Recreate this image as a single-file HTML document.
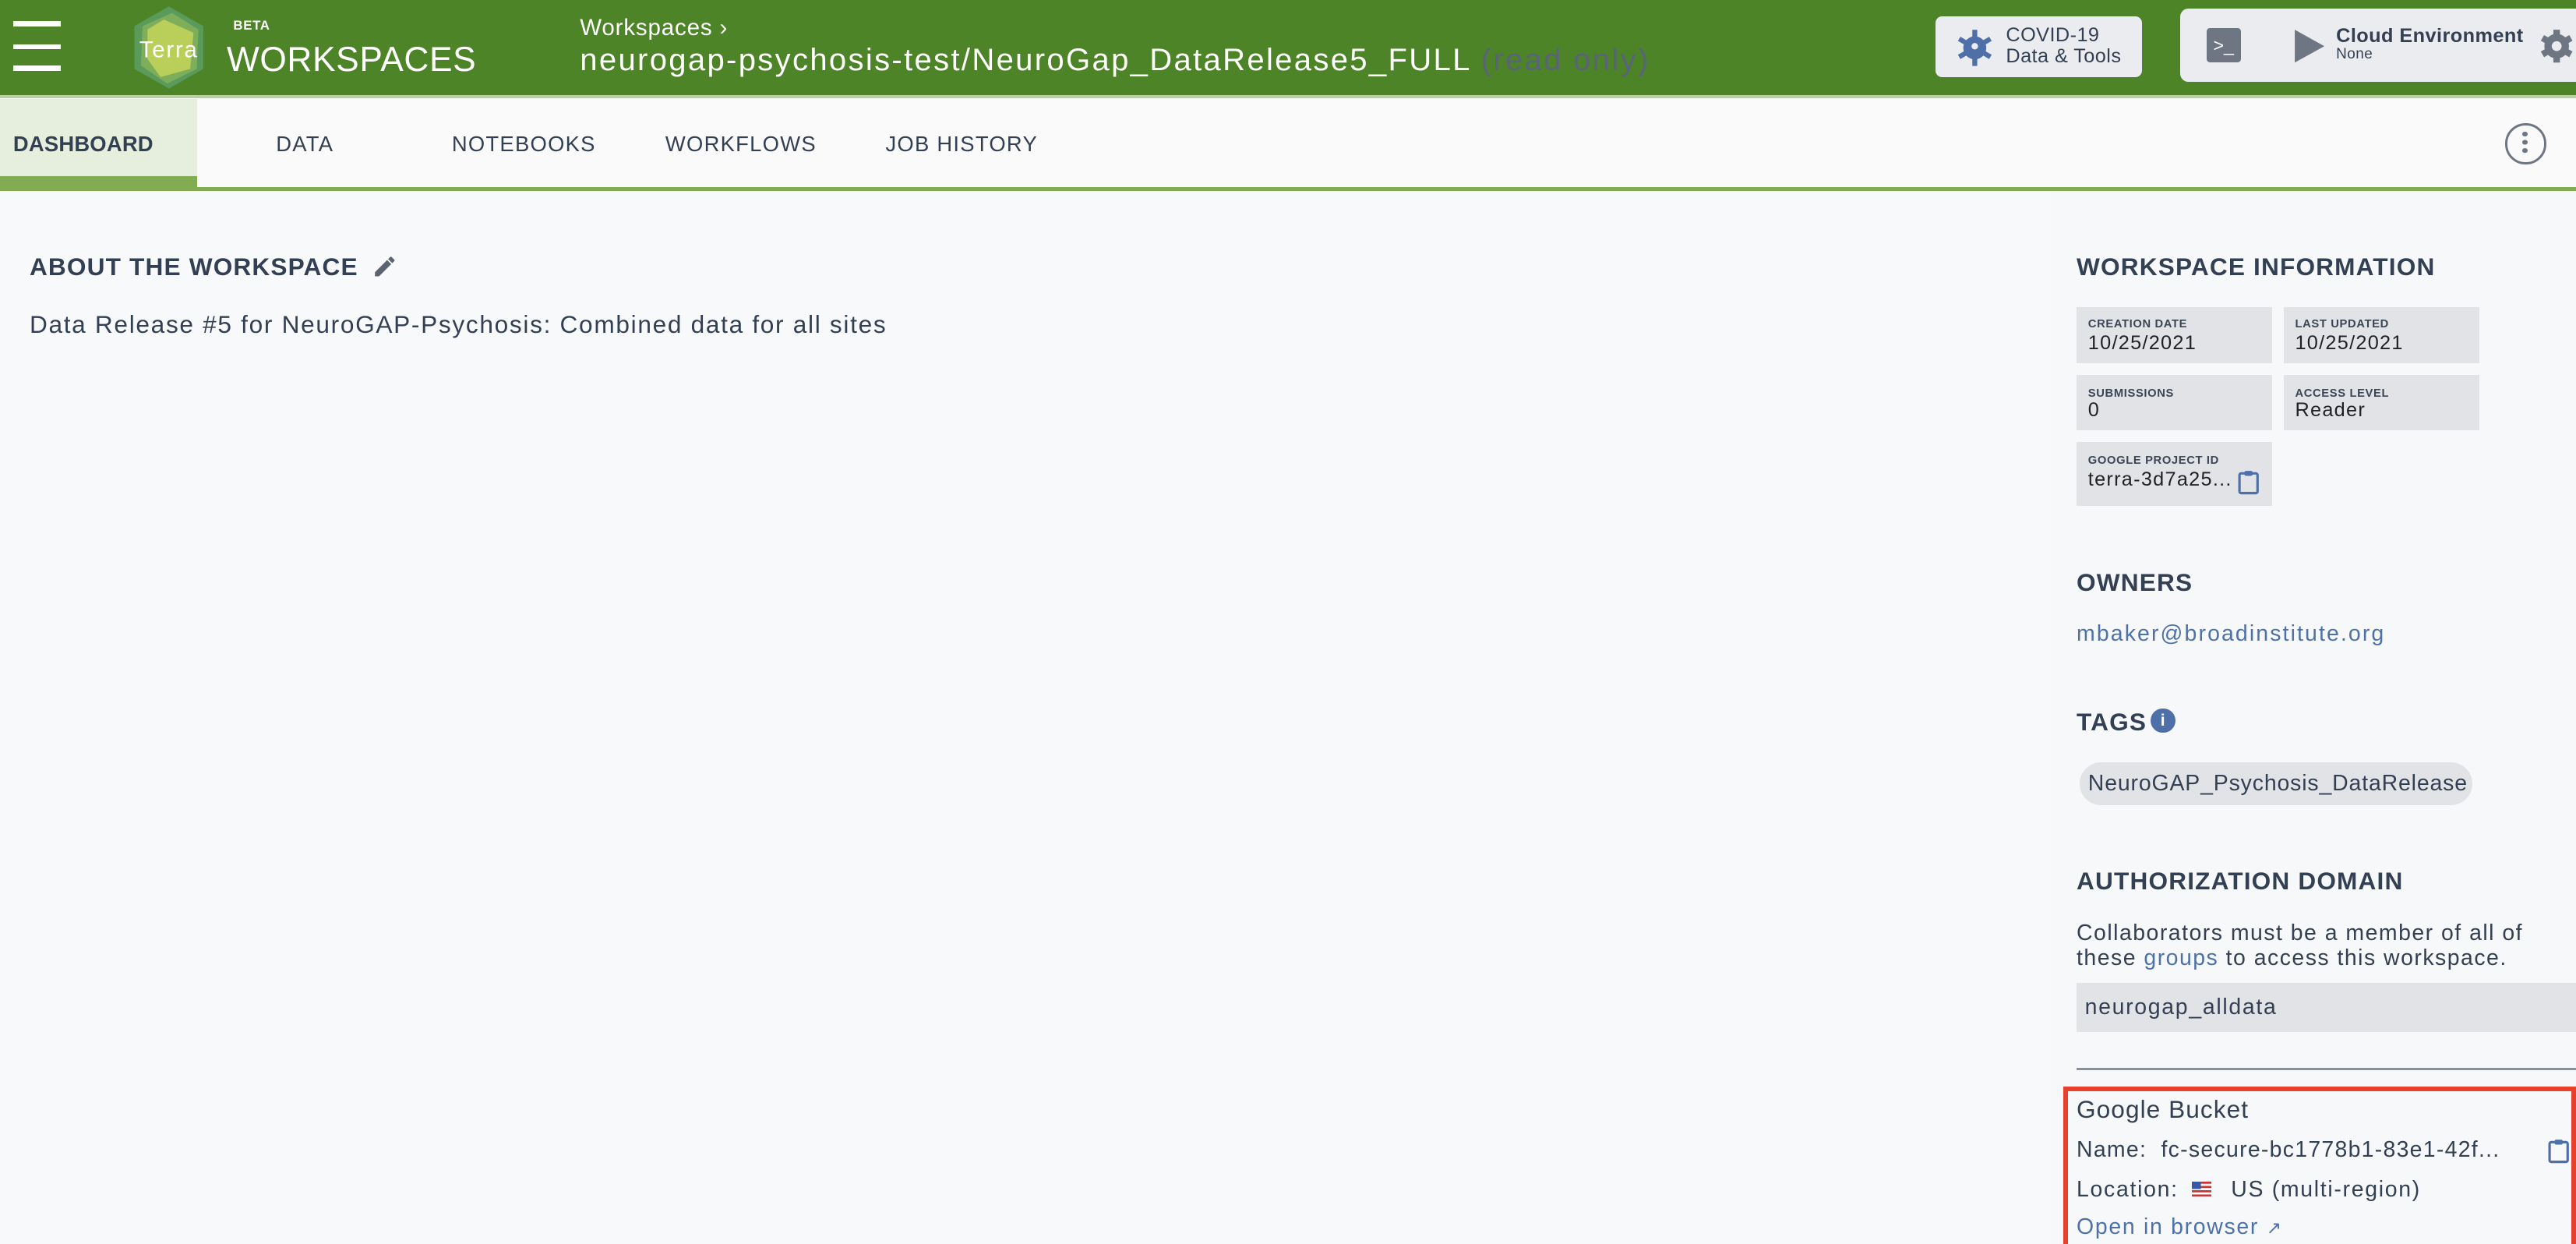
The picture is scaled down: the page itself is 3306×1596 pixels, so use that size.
<!DOCTYPE html>
<html><head><meta charset="utf-8"><style>
html,body{margin:0;padding:0;}
body{width:3306px;height:1596px;overflow:hidden;background:#f7f8fa;}
#r{zoom:2.10842;width:1568px;height:757px;position:relative;overflow:hidden;font-family:"Liberation Sans",sans-serif;color:#333f52;letter-spacing:0.8px;}
.a{position:absolute;white-space:nowrap;line-height:1;}
.h{font-weight:bold;font-size:15px;color:#333f52;letter-spacing:0.55px;}
.box{position:absolute;background:#e1e3e7;}
.lbl{position:absolute;font-size:7px;font-weight:bold;color:#3a4556;letter-spacing:0.3px;}
.val{position:absolute;font-size:12px;color:#222;letter-spacing:0.6px;}
.tab{position:absolute;top:81px;font-size:13px;color:#333f52;letter-spacing:0.6px;}
.link{color:#4d72aa;}
</style></head><body><div id="r">
<!-- header -->
<div class="a" style="left:0;top:0;width:1568px;height:58px;background:#4d8427;"></div>
<div class="a" style="left:0;top:58px;width:1568px;height:2px;background:#b9d29c;"></div>
<div class="a" style="left:8px;top:13px;width:29px;height:3px;background:#fff;"></div>
<div class="a" style="left:8px;top:27px;width:29px;height:3px;background:#fff;"></div>
<div class="a" style="left:8px;top:40px;width:29px;height:3px;background:#fff;"></div>
<svg class="a" style="left:78px;top:2px" width="50" height="54" viewBox="0 0 50 54">
<polygon points="25,2 46,14 46,40 25,52 4,40 4,14" fill="#5a9a5a"/>
<polygon points="27,6 43,16 42,40 24,49 8,38 9,14" fill="#7fae5a"/>
<polygon points="22,10 40,18 38,40 20,45 12,34 12,16" fill="#b9cf59"/>
<text x="25" y="33" font-family="Liberation Sans" font-size="14" fill="#fff" text-anchor="middle">Terra</text>
</svg>
<div class="a" style="left:142px;top:12px;font-size:8px;font-weight:bold;color:#fff;letter-spacing:0.3px;">BETA</div>
<div class="a" style="left:138px;top:26px;font-size:21px;color:#fff;letter-spacing:0.3px;">WORKSPACES</div>
<div class="a" style="left:353px;top:10px;font-size:14px;color:#fff;letter-spacing:0.4px;">Workspaces ›</div>
<div class="a" style="left:353px;top:27px;font-size:19px;color:#fff;letter-spacing:1.1px;">neurogap-psychosis-test/NeuroGap_DataRelease5_FULL <span style="color:#5a6478">(read only)</span></div>
<div class="a" style="left:1178px;top:10px;width:126px;height:37px;background:#eaecf0;border-radius:4px;"></div>
<svg class="a" style="left:1189px;top:16px" width="26" height="26" viewBox="0 0 26 26"><g fill="#4e6fa8"><circle cx="13" cy="13" r="7"/><rect x="11.5" y="2" width="3" height="22"/><rect x="11.5" y="2" width="3" height="22" transform="rotate(60 13 13)"/><rect x="11.5" y="2" width="3" height="22" transform="rotate(120 13 13)"/></g><circle cx="13" cy="12" r="2" fill="#eaecf0"/></svg>
<div class="a" style="left:1221px;top:15px;font-size:12px;color:#333f52;line-height:13px;letter-spacing:0.2px;">COVID-19<br>Data &amp; Tools</div>
<div class="a" style="left:1327px;top:5px;width:250px;height:45px;background:#eaecf0;border-radius:5px;"></div>
<div class="a" style="left:1343px;top:17px;width:21px;height:21px;background:#6f7683;border-radius:2px;color:#fff;font-size:11px;line-height:21px;text-align:center;letter-spacing:0;">&gt;_</div>
<svg class="a" style="left:1396px;top:17px" width="20" height="22"><polygon points="1,1 19,11 1,21" fill="#6f7683"/></svg>
<div class="a" style="left:1422px;top:16px;font-size:12px;font-weight:bold;color:#333f52;letter-spacing:0.2px;">Cloud Environment</div>
<div class="a" style="left:1422px;top:29px;font-size:9px;color:#333f52;letter-spacing:0.2px;">None</div>
<svg class="a" style="left:1545px;top:17px" width="22" height="22" viewBox="0 0 22 22"><g fill="#6f7683"><circle cx="11" cy="11" r="7.5"/><rect x="9" y="1" width="4" height="20"/><rect x="9" y="1" width="4" height="20" transform="rotate(60 11 11)"/><rect x="9" y="1" width="4" height="20" transform="rotate(120 11 11)"/></g><circle cx="11" cy="11" r="3" fill="#eaecf0"/></svg>
<!-- tabs -->
<div class="a" style="left:0;top:60px;width:1568px;height:55px;background:#fafafa;"></div>
<div class="a" style="left:0;top:60px;width:120px;height:47px;background:#e6efdd;"></div>
<div class="a" style="left:0;top:107px;width:120px;height:8px;background:#82ac52;"></div>
<div class="a" style="left:0;top:114px;width:1568px;height:2px;background:#82ac52;"></div>
<div class="tab a" style="left:8px;font-weight:bold;letter-spacing:0.1px;">DASHBOARD</div>
<div class="tab a" style="left:168px;">DATA</div>
<div class="tab a" style="left:275px;">NOTEBOOKS</div>
<div class="tab a" style="left:405px;">WORKFLOWS</div>
<div class="tab a" style="left:539px;">JOB HISTORY</div>
<div class="a" style="left:1525px;top:75px;width:22px;height:22px;border:1.5px solid #6f7683;border-radius:50%;"></div>
<div class="a" style="left:1535.5px;top:80px;width:3px;height:3px;background:#6f7683;border-radius:50%;box-shadow:0 5px 0 #6f7683,0 10px 0 #6f7683;"></div>
<!-- main -->
<div class="a" style="left:0;top:116px;width:1249px;height:641px;background:#f8f9fb;"></div>
<div class="a h" style="left:18px;top:155px;">ABOUT THE WORKSPACE</div>
<svg class="a" style="left:226px;top:154px" width="16" height="16" viewBox="0 0 16 16"><path d="M2 11.5V14h2.5l7.4-7.4-2.5-2.5zM13.7 4.8a.7.7 0 000-1L12.2 2.3a.7.7 0 00-1 0L10 3.5 12.5 6z" fill="#5b6270"/></svg>
<div class="a" style="left:18px;top:190px;font-size:15px;color:#333f52;">Data Release #5 for NeuroGAP-Psychosis: Combined data for all sites</div>
<!-- right panel -->
<div class="a h" style="left:1264px;top:155px;">WORKSPACE INFORMATION</div>
<div class="box" style="left:1264px;top:187px;width:119px;height:34px;"></div>
<div class="box" style="left:1390px;top:187px;width:119px;height:34px;"></div>
<div class="box" style="left:1264px;top:228px;width:119px;height:34px;"></div>
<div class="box" style="left:1390px;top:228px;width:119px;height:34px;"></div>
<div class="box" style="left:1264px;top:269px;width:119px;height:39px;"></div>
<div class="lbl a" style="left:1271px;top:194px;">CREATION DATE</div>
<div class="val a" style="left:1271px;top:203px;">10/25/2021</div>
<div class="lbl a" style="left:1397px;top:194px;">LAST UPDATED</div>
<div class="val a" style="left:1397px;top:203px;">10/25/2021</div>
<div class="lbl a" style="left:1271px;top:236px;">SUBMISSIONS</div>
<div class="val a" style="left:1271px;top:244px;">0</div>
<div class="lbl a" style="left:1397px;top:236px;">ACCESS LEVEL</div>
<div class="val a" style="left:1397px;top:244px;">Reader</div>
<div class="lbl a" style="left:1271px;top:277px;">GOOGLE PROJECT ID</div>
<div class="val a" style="left:1271px;top:286px;">terra-3d7a25...</div>
<svg class="a" style="left:1362px;top:285px" width="13" height="16" viewBox="0 0 13 16"><rect x="1" y="3" width="11" height="12" rx="1" fill="none" stroke="#4e6fa8" stroke-width="1.5"/><rect x="4" y="1.5" width="5" height="3" rx="1" fill="#4e6fa8"/></svg>
<div class="a h" style="left:1264px;top:347px;">OWNERS</div>
<div class="a link" style="left:1264px;top:379px;font-size:13.5px;letter-spacing:1px;">mbaker@broadinstitute.org</div>
<div class="a h" style="left:1264px;top:432px;">TAGS</div>
<div class="a" style="left:1309px;top:431px;width:15px;height:15px;background:#4e6fa8;border-radius:50%;color:#fff;font-size:10px;font-weight:bold;text-align:center;line-height:15px;letter-spacing:0;">i</div>
<div class="a" style="left:1266px;top:464px;width:239px;height:26px;background:#e1e3e7;border-radius:13px;"></div>
<div class="a" style="left:1271px;top:470px;font-size:13.5px;color:#333f52;letter-spacing:0.4px;">NeuroGAP_Psychosis_DataRelease</div>
<div class="a h" style="left:1264px;top:529px;">AUTHORIZATION DOMAIN</div>
<div class="a" style="left:1264px;top:560px;font-size:13.5px;line-height:15.5px;color:#333f52;letter-spacing:0.7px;">Collaborators must be a member of all of<br>these <span class="link">groups</span> to access this workspace.</div>
<div class="box" style="left:1264px;top:598px;width:304px;height:30px;"></div>
<div class="a" style="left:1269px;top:606px;font-size:13.5px;color:#333f52;">neurogap_alldata</div>
<div class="a" style="left:1264px;top:650px;width:304px;height:1px;background:#8a909a;"></div>
<div class="a" style="left:1256px;top:661px;height:96px;border:3px solid #e8402a;border-bottom:none;box-sizing:border-box;width:312px;"></div>
<div class="a" style="left:1264px;top:668px;font-size:15px;color:#333f52;letter-spacing:0.5px;">Google Bucket</div>
<div class="a" style="left:1264px;top:693px;font-size:13.5px;color:#333f52;letter-spacing:0.6px;"><span style="font-weight:bold;font-weight:normal">Name:</span>&nbsp; fc-secure-bc1778b1-83e1-42f...</div>
<svg class="a" style="left:1551px;top:692px" width="13" height="16" viewBox="0 0 13 16"><rect x="1" y="3" width="11" height="12" rx="1" fill="none" stroke="#4e6fa8" stroke-width="1.5"/><rect x="4" y="1.5" width="5" height="3" rx="1" fill="#4e6fa8"/></svg>
<div class="a" style="left:1264px;top:717px;font-size:13.5px;color:#333f52;">Location:</div>
<svg class="a" style="left:1334px;top:719px" width="12" height="9"><rect width="12" height="9" fill="#c33"/><rect y="1.3" width="12" height="1.3" fill="#fff"/><rect y="3.9" width="12" height="1.3" fill="#fff"/><rect y="6.5" width="12" height="1.3" fill="#fff"/><rect width="5.5" height="4.5" fill="#3a58a8"/></svg>
<div class="a" style="left:1358px;top:717px;font-size:13.5px;color:#333f52;">US (multi-region)</div>
<div class="a link" style="left:1264px;top:740px;font-size:13.5px;">Open in browser <span style="font-size:11px">↗</span></div>
</div></body></html>
